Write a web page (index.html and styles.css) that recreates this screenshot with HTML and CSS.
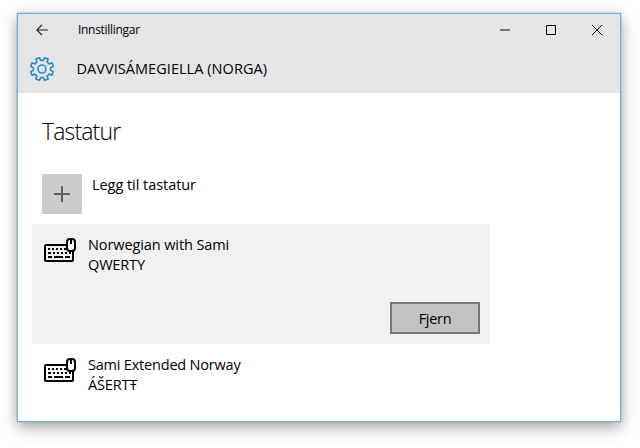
FILE: index.html
```
<!DOCTYPE html>
<html lang="nb">
<head>
<meta charset="utf-8">
<title>Innstillingar</title>
<link rel="stylesheet" href="styles.css">
</head>
<body>
<svg class="defs" width="0" height="0">
  <symbol id="keyboard" viewBox="0 0 32 24">
    <rect x="1" y="7" width="28" height="16" rx="1" fill="none" stroke="#000" stroke-width="2"/>
    <path d="M4 11h2m2 0h2m2 0h2m2 0h2m2 0h2M4 15h3m2 0h2m2 0h2m2 0h2m2 0h2m2 0h2M4 19h4m2 0h9m2 0h5" fill="none" stroke="#000" stroke-width="2"/>
    <rect class="mouse-body" x="23" y="1" width="8" height="12" rx="3"/>
    <path d="M27 1v5" stroke="#000" stroke-width="2"/>
  </symbol>
</svg>
<div class="window">
  <header>
    <div class="titlebar">
      <svg class="back" width="12" height="12" viewBox="0 0 12 12"><path d="M12 6H.8M6 .8L.8 6 6 11.2"/></svg>
      <span class="app">Innstillingar</span>
      <div class="controls">
        <svg width="10" height="10" viewBox="0 0 10 10"><path class="minimize" d="M0 5h10"/></svg>
        <svg width="10" height="10" viewBox="0 0 10 10"><path d="M.5.5h9v9h-9z"/></svg>
        <svg width="10" height="10" viewBox="0 0 10 10"><path d="M0 0l10 10M10 0L0 10"/></svg>
      </div>
    </div>
    <div class="heading">
      <svg class="gear" width="26" height="26" viewBox="-13 -13 26 26"><path d="M8.6 1.3L11.3 2.6 10 6.2 7.1 5.1 5.1 7.1 6.2 10 2.6 11.3 1.3 8.6-1.3 8.6-2.6 11.3-6.2 10-5.1 7.1-7.1 5.1-10 6.2-11.3 2.6-8.6 1.3-8.6-1.3-11.3-2.6-10-6.2-7.1-5.1-5.1-7.1-6.2-10-2.6-11.3-1.3-8.6 1.3-8.6 2.6-11.3 6.2-10 5.1-7.1 7.1-5.1 10-6.2 11.3-2.6 8.6-1.3z"/><circle r="4"/></svg>
      <span class="language">DAVVISÁMEGIELLA (NORGA)</span>
    </div>
  </header>
  <main>
    <h1>Tastatur</h1>
    <div class="add">
      <div class="plus"><svg width="16" height="16" viewBox="0 0 16 16"><path d="M0 8h16M8 0v16"/></svg></div>
      <span class="add-label">Legg til tastatur</span>
    </div>
    <div class="keyboard selected">
      <svg width="32" height="24"><use href="#keyboard"/></svg>
      <div class="names"><div class="norwegian">Norwegian with Sami</div><div class="qwerty">QWERTY</div></div>
      <button>Fjern</button>
    </div>
    <div class="keyboard">
      <svg width="32" height="24"><use href="#keyboard"/></svg>
      <div class="names"><div class="extended">Sami Extended Norway</div><div class="asertt">ÁŠERTŦ</div></div>
    </div>
  </main>
</div>
</body>
</html>
```
FILE: styles.css
```
* { box-sizing: border-box; }
body {
  margin: 0;
  padding: 13px 0 0 17px;
  height: 448px;
  overflow: hidden;
  background: #fff;
  color: #000;
  font: 14.5px/20px "Open Sans", "Noto Sans", sans-serif;
  white-space: nowrap;
}
.defs { display: block; height: 0; }
svg { display: block; flex: none; }
.window {
  width: 604px;
  height: 409px;
  border: 1px solid #67b2e8;
  background: #fff;
  box-shadow: 0 0 1px rgba(0,0,0,.5), 0 5px 15px rgba(0,0,0,.38);
}
header { height: 79px; background: #e5e5e5; }
.titlebar { display: flex; align-items: center; height: 31px; padding-left: 18px; }
.back { fill: none; stroke: #222; stroke-width: 1.2; }
.app { margin-left: 30px; padding-top: 1px; font-size: 12px; letter-spacing: -.3px; }
.controls { display: flex; gap: 36px; margin: 0 18px 0 auto; }
.controls svg { fill: none; stroke: #000; stroke-width: 1; }
.controls .minimize { stroke: #777; stroke-width: 2; }
.heading { display: flex; align-items: center; height: 48px; padding-left: 11px; }
.gear { fill: none; stroke: #2b8dcc; stroke-width: 1.6; stroke-linejoin: round; }
.language { margin-left: 21.5px; letter-spacing: .05px; }
main { padding: 22px 0 0 14px; }
h1 {
  margin: 0 0 26px 10px;
  font-size: 23px;
  font-weight: 350;
  line-height: 33px;
  letter-spacing: -.85px;
}
.add { display: flex; height: 40px; margin: 0 0 10px 10px; }
.plus { display: grid; place-items: center; width: 40px; height: 40px; background: #ccc; }
.plus svg { stroke: #606060; stroke-width: 2; }
.add-label { margin: 1px 0 0 10px; letter-spacing: -.05px; }
.keyboard { display: flex; width: 458px; height: 120px; padding: 10px 10px 10px 12px; }
.keyboard svg { margin-top: 4px; }
.selected { background: #f1f1f1; }
.mouse-body { fill: #fff; stroke: #000; stroke-width: 2; }
.selected .mouse-body { fill: #f1f1f1; }
.names { margin: 1px 0 0 12px; }
.norwegian { letter-spacing: -.1px; }
.extended { letter-spacing: -.2px; }
.qwerty, .asertt { letter-spacing: -.15px; }
button {
  width: 90px;
  height: 32px;
  margin: auto 0 0 auto;
  padding: 1px 0 0;
  border: 2px solid #777;
  background: #c2c2c2;
  color: #000;
  font: inherit;
  letter-spacing: -.3px;
}
```
